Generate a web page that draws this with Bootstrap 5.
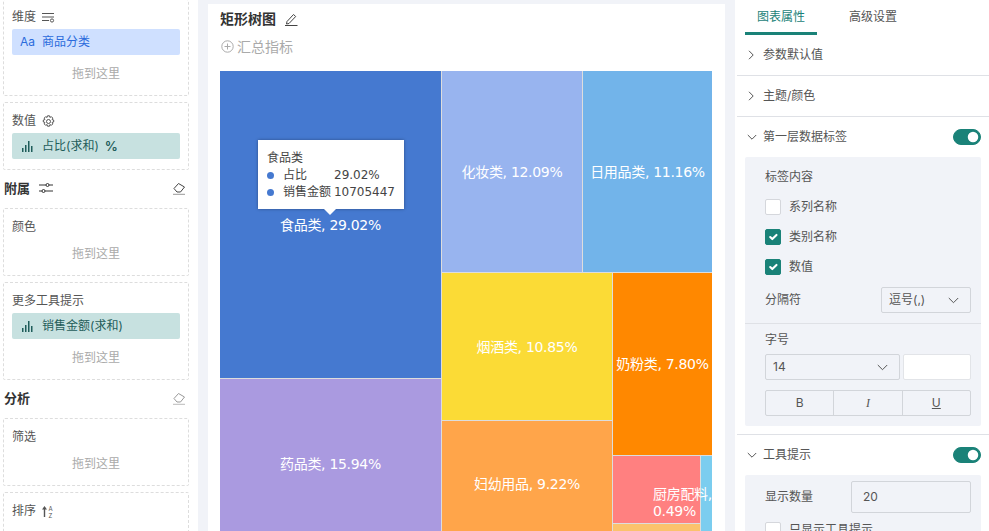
<!DOCTYPE html>
<html lang="zh"><head><meta charset="utf-8"><title>矩形树图</title>
<link rel="stylesheet" href="https://cdn.jsdelivr.net/npm/bootstrap@5.3.0/dist/css/bootstrap.min.css">
<style>
html,body{height:531px;overflow:hidden}
body{background:#f1f3f8;font-family:Inter,"Noto Sans CJK SC",sans-serif;font-size:12px;color:#555;line-height:18px}
.app{height:531px;overflow:hidden}
.lp{width:198px;flex:none;background:#fff;padding:0 9px 0 3px;height:531px;overflow:hidden}
.drop{border:1px dashed #ddd;padding:0 8px;margin-bottom:6px;border-radius:2px;height:68px}
.drop.first{border-top:0;height:96px;padding-top:8px}
.drop.two{height:98px}
.drop.last{height:60px}
.drop-title{height:18px;margin:9px 0 3px;display:flex;align-items:center;gap:6px}
.drop.first .drop-title{margin-top:0}
.chip{height:26px;border-radius:2px;display:flex;align-items:center;padding-left:8px;gap:7px}
.chip-blue{background:#cfe0ff;color:#2b6bdc}
.chip-teal{background:#c7e1e0;color:#1f5d5a;padding-left:10px;gap:9px}
.pct{font-size:13px;font-weight:600;margin-left:-3px}
.drag{color:#aaa;text-align:center;height:18px;margin-top:10px}
.drop-title+.drag{margin-top:9px}
.lh{height:24px;display:flex;align-items:center;justify-content:space-between;font-weight:700;font-size:13px;color:#333;margin-bottom:8px}
.lh span{padding-left:1px}
.lh span.gp{display:flex;align-items:center;gap:9px}
.er{margin-right:3px}
.mid{width:517px;flex:none;margin:4px 10px 0;background:#fff;height:527px;overflow:hidden;padding:0 12px}
.ct{height:30px;font-size:14px;font-weight:700;color:#333;display:flex;align-items:center;gap:9px}
.sum{height:25px;font-size:14px;color:#aaa;display:flex;align-items:center;gap:3px;padding-left:1px}
.tm{margin-top:12px;width:492px;height:500px;display:flex;gap:1px;background:#ddd;font-family:"DejaVu Sans","Noto Sans CJK SC",sans-serif;font-size:14px;letter-spacing:-.3px;color:#fff;line-height:20px;position:relative}
.tc{display:flex;flex-direction:column;gap:1px}
.tr{display:flex;gap:1px}
.tile{display:flex;align-items:center;justify-content:center;white-space:nowrap;overflow:hidden;text-align:center}
.tipbox{position:absolute;left:38px;top:69px;width:146px;height:69px;background:#fff;box-shadow:0 0 3px rgba(0,0,0,.35);color:#444;font-size:12px;letter-spacing:0;line-height:17px;padding:10px 9px}
.tipbox:after{content:"";position:absolute;left:66px;top:69px;border:6px solid transparent;border-top-color:#fff;border-bottom:0}
.tiprow{display:flex;align-items:center;white-space:nowrap}
.dot{width:7px;height:7px;border-radius:50%;background:#4579d0;margin-right:9px;flex:none}
.rp{width:254px;flex:none;background:#fff;height:531px;overflow:hidden;padding-left:2px}
.tabs{height:35px;padding-left:8px;display:flex;gap:20px}
.tabx{width:72px;text-align:center;padding-top:8px;height:35px;color:#555}
.tabx.on{color:#1a8278;border-bottom:3px solid #1a8278}
.sec{height:41px;border-bottom:1px solid #dfe1e6;display:flex;align-items:center;padding:0 8px 0 10px;gap:8px;color:#555}
.sec.op{border:0;height:40px}
.form-switch.tg{margin:0 0 0 auto;padding:0;min-height:0;height:16px;display:flex}
.tg .form-check-input{width:28px;height:16px;margin:0;background-color:#1a8278;border-color:#1a8278;float:none}
.grp{margin:0 8px;background:#f1f3f8;border-radius:2px}
.g1{height:269px;margin-bottom:8px}
.gi{padding:10px 10px 0 20px}
.ck{display:flex;align-items:center;gap:8px;height:16px;margin:14px 0}
.ck .form-check-input{width:16px;height:16px;margin:0;border-radius:2px;border-color:#d5d7dc;flex:none}
.ck .form-check-input:checked{background-color:#1a8278;border-color:#1a8278}
.ck.lastck{margin-bottom:12px}
.sep{border-top:1px solid #dfe1e6}
.sel{height:26px;background:#f1f3f8;border:1px solid #d2d5da;border-radius:2px;display:flex;align-items:center;justify-content:space-between;padding:0 11px 0 7px;color:#555}
.bg2{height:26px;border:1px solid #d2d5da;border-radius:2px;display:flex}
.bg2 .btn{flex:1;border:0;border-right:1px solid #d2d5da;border-radius:0;padding:0;font-size:12px;line-height:24px;color:#555;background:transparent}
.bg2 .btn:last-child{border-right:0}
.whitein{width:68px;height:26px;background:#fff;border:1px solid #e2e4e8;border-radius:2px;padding:0}
.num{width:120px;height:32px;background:#f1f3f8;border:1px solid #d2d5da;border-radius:2px;padding:0 11px;font-size:12px;color:#555}
.g2{height:70px;position:relative}
</style></head><body>
<div class="app d-flex">
<aside class="lp">
  <div class="drop first">
    <div class="drop-title">维度 <svg width="13" height="11" viewBox="0 0 13 11" fill="none" stroke="#555"><path d="M0 1.500h12M0 5h12M0 8.500h7"/><circle cx="10" cy="8.500" r="1.600"/></svg></div>
    <div class="chip chip-blue"><span>Aa</span><span>商品分类</span></div>
    <div class="drag">拖到这里</div>
  </div>
  <div class="drop">
    <div class="drop-title">数值 <svg width="13" height="13" viewBox="0 0 13 13" fill="none" stroke="#555"><circle cx="6.500" cy="6.500" r="2"/><path d="M5.500 .8h2l.4 1.600 1.500-.7 1.400 1.400-.7 1.500 1.600.4v2l-1.600.4.7 1.500-1.400 1.400-1.500-.7-.4 1.600h-2l-.4-1.600-1.500.7-1.400-1.400.7-1.500-1.600-.4v-2l1.600-.4-.7-1.500 1.400-1.400 1.500.7z"/></svg></div>
    <div class="chip chip-teal"><svg width="11" height="11" viewBox="0 0 11 11" fill="#1f5d5a"><rect x="0" y="7" width="1.500" height="4"/><rect x="3" y="4" width="1.500" height="7"/><rect x="6" y="0" width="1.500" height="11"/><rect x="9" y="5" width="1.500" height="6"/></svg><span>占比(求和)</span><span class="pct">%</span></div>
  </div>
  <div class="lh"><span class="gp">附属 <svg width="14" height="12" viewBox="0 0 14 12" fill="none" stroke="#333"><path d="M0 3h7M10 3h4M0 9h3M6 9h8"/><circle cx="8.500" cy="3" r="1.500"/><circle cx="4.500" cy="9" r="1.500"/></svg></span>
    <svg class="er" width="13" height="13" viewBox="0 0 13 13" fill="none" stroke="#444"><path d="M1 6.500l4.500-5 6 3.500-4 5H4z"/><path d="M0 12.300h12" stroke="#999"/></svg></div>
  <div class="drop"><div class="drop-title">颜色</div><div class="drag">拖到这里</div></div>
  <div class="drop two">
    <div class="drop-title">更多工具提示</div>
    <div class="chip chip-teal"><svg width="11" height="11" viewBox="0 0 11 11" fill="#1f5d5a"><rect x="0" y="7" width="1.500" height="4"/><rect x="3" y="4" width="1.500" height="7"/><rect x="6" y="0" width="1.500" height="11"/><rect x="9" y="5" width="1.500" height="6"/></svg><span>销售金额(求和)</span></div>
    <div class="drag">拖到这里</div>
  </div>
  <div class="lh"><span>分析</span><svg class="er" width="13" height="13" viewBox="0 0 13 13" fill="none" stroke="#999"><path d="M1 6.500l4.500-5 6 3.500-4 5H4z"/><path d="M0 12.300h12" stroke="#bbb"/></svg></div>
  <div class="drop"><div class="drop-title">筛选</div><div class="drag">拖到这里</div></div>
  <div class="drop last"><div class="drop-title">排序 <svg width="12" height="13" viewBox="0 0 12 13" fill="#555"><path d="M2.500 1L0 4.500h1.800V12h1.400V4.500H5z"/><text x="6.500" y="5.500" font-size="6" font-family="Inter">A</text><text x="6.500" y="12.500" font-size="6" font-family="Inter">Z</text></svg></div></div>
</aside>
<main class="mid">
  <div class="ct">矩形树图 <svg width="13" height="13" viewBox="0 0 13 13" fill="none" stroke="#444"><path d="M2 8.500L8.500 1.500l2.200 2L4 10.500l-2.500.5z"/><path d="M0 12.500h12.500"/></svg></div>
  <div class="sum"><svg width="13" height="13" viewBox="0 0 13 13" fill="none" stroke="#aaa"><circle cx="6.500" cy="6.500" r="5.700"/><path d="M3.500 6.500h6M6.500 3.500v6"/></svg> 汇总指标</div>
  <div class="tm">
    <div class="tc" style="width:221px">
      <div class="tile" style="height:307px;background:#4579d0">食品类, 29.02%</div>
      <div class="tile" style="height:170px;background:#aa9ae0">药品类, 15.94%</div>
    </div>
    <div class="tc" style="width:270px">
      <div class="tr" style="height:201px">
        <div class="tile" style="width:140px;background:#98b4ef">化妆类, 12.09%</div>
        <div class="tile" style="width:129px;background:#72b4ea">日用品类, 11.16%</div>
      </div>
      <div class="tr" style="height:276px">
        <div class="tc" style="width:170px">
          <div class="tile" style="height:147px;background:#fbdb36">烟酒类, 10.85%</div>
          <div class="tile" style="height:126px;background:#ffa54a">妇幼用品, 9.22%</div>
        </div>
        <div class="tc" style="width:99px">
          <div class="tile" style="height:182px;background:#ff8800">奶粉类, 7.80%</div>
          <div class="tr" style="height:93px">
            <div class="tc" style="width:87px">
              <div class="tile" style="height:67px;background:#ff8080;justify-content:flex-start;overflow:visible;text-align:left;padding:26px 0 0 40px;line-height:17px;position:relative;z-index:1"><span>厨房配料,<br>0.49%</span></div>
              <div class="tile" style="height:25px;background:#fbc26c"></div>
            </div>
            <div class="tile" style="width:11px;background:#7bcdef"></div>
          </div>
        </div>
      </div>
    </div>
    <div class="tipbox">
      <div>食品类</div>
      <div class="tiprow"><i class="dot"></i><span style="width:51px">占比</span><span>29.02%</span></div>
      <div class="tiprow"><i class="dot"></i><span style="width:51px">销售金额</span><span>10705447</span></div>
    </div>
  </div>
</main>
<section class="rp">
  <div class="tabs"><div class="tabx on">图表属性</div><div class="tabx">高级设置</div></div>
  <div class="sec"><svg width="8" height="10" viewBox="0 0 8 10" fill="none" stroke="#555"><path d="M2 .8L6.200 5 2 9.200"/></svg>参数默认值</div>
  <div class="sec"><svg width="8" height="10" viewBox="0 0 8 10" fill="none" stroke="#555"><path d="M2 .8L6.200 5 2 9.200"/></svg>主题/颜色</div>
  <div class="sec op"><svg width="10" height="8" viewBox="0 0 10 8" fill="none" stroke="#555"><path d="M.8 2L5 6.200 9.200 2"/></svg><span style="margin-left:-2px">第一层数据标签</span><div class="form-check form-switch tg"><input class="form-check-input" type="checkbox" checked aria-label="第一层数据标签"></div></div>
  <div class="grp g1">
    <div class="gi" style="height:166px;padding-top:11px">
      <div>标签内容</div>
      <div class="ck" style="margin-top:13px"><input class="form-check-input" type="checkbox" aria-label="系列名称"><span>系列名称</span></div>
      <div class="ck"><input class="form-check-input" type="checkbox" checked aria-label="类别名称"><span>类别名称</span></div>
      <div class="ck lastck"><input class="form-check-input" type="checkbox" checked aria-label="数值"><span>数值</span></div>
      <div class="d-flex align-items-center justify-content-between"><span>分隔符</span><div class="sel" style="width:90px"><span>逗号(,)</span><svg width="11" height="7" viewBox="0 0 11 7" fill="none" stroke="#555"><path d="M.8 1l4.700 4.700L10.200 1"/></svg></div></div>
    </div>
    <div class="sep"></div>
    <div class="gi" style="padding-top:7px">
      <div>字号</div>
      <div class="d-flex" style="gap:3px;margin:5px 0 10px"><div class="sel" style="width:135px"><span>14</span><svg width="11" height="7" viewBox="0 0 11 7" fill="none" stroke="#555"><path d="M.8 1l4.700 4.700L10.200 1"/></svg></div><div class="whitein"></div></div>
      <div class="bg2"><button class="btn" type="button">B</button><button class="btn" type="button" style="font-style:italic;font-family:'Liberation Serif'">I</button><button class="btn" type="button" style="text-decoration:underline">U</button></div>
    </div>
  </div>
  <div class="sep"></div>
  <div class="sec op"><svg width="10" height="8" viewBox="0 0 10 8" fill="none" stroke="#555"><path d="M.8 2L5 6.200 9.200 2"/></svg><span style="margin-left:-2px">工具提示</span><div class="form-check form-switch tg"><input class="form-check-input" type="checkbox" checked aria-label="工具提示"></div></div>
  <div class="grp g2">
    <div class="gi d-flex align-items-center justify-content-between" style="padding-top:6px"><span>显示数量</span><div class="num d-flex align-items-center">20</div></div>
    <div class="ck" style="margin:9px 0 0 20px"><input class="form-check-input" type="checkbox" aria-label="只显示工具提示"><span>只显示工具提示</span></div>
  </div>
</section>
</div>
</body></html>
